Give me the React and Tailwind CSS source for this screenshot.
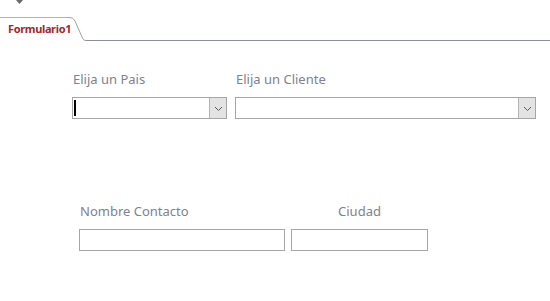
import React from "react";

function Chevron() {
  return (
    <svg width="9" height="6" viewBox="0 0 9 6" className="block mt-[1px]">
      <path d="M1 1 L4.5 4.5 L8 1" fill="none" stroke="#5a5a5a" strokeWidth="1" />
    </svg>
  );
}

function Combo({ width, cursor }) {
  return (
    <div className={`flex h-[22px] border border-[#a6a6a6] bg-white ${width}`}>
      <div className="flex-1 flex items-center pl-[1px]">
        {cursor ? <div className="w-[2px] h-[16px] bg-black" /> : null}
      </div>
      <div className="w-[17px] h-full border-l border-[#b4b4b4] bg-[#e3e3e3] flex items-center justify-center">
        <Chevron />
      </div>
    </div>
  );
}

export default function App() {
  const font = { fontFamily: '"Noto Sans", "Open Sans", sans-serif' };
  return (
    <div className="w-[550px] h-[301px] bg-white overflow-hidden" style={font}>
      <div className="h-[17px] pl-[16px]">
        <svg width="7" height="4" viewBox="0 0 7 4" className="block">
          <path d="M0 0 L7 0 L3.5 4 Z" fill="#6b6b6b" />
        </svg>
      </div>
      <div className="flex h-[24px]">
        <div className="w-[68px] border-t border-[#b9b2ac] pl-[8px] pt-[4px] shrink-0">
          <div className="text-[11px] leading-[14px] font-bold text-[#a4262c] whitespace-nowrap tracking-[-0.35px]">
            Formulario1
          </div>
        </div>
        <svg width="18" height="24" viewBox="0 0 18 24" className="block shrink-0">
          <path
            d="M0 0.5 C4 0.5 5 1 7 4 L14 20 C15.5 23 16 23.5 18 23.5"
            fill="none"
            stroke="#9a9ea6"
            strokeWidth="1"
          />
        </svg>
        <div className="flex-1 border-b border-[#8c9199]" />
      </div>

      <div className="pt-[29px] pl-[72px] flex gap-[8px]">
        <div className="w-[155px] flex flex-col">
          <div className="pl-[1px] text-[13px] leading-[18px] text-[#7d828d]">Elija un Pais</div>
          <div className="mt-[9px]">
            <Combo width="w-[155px]" cursor />
          </div>
        </div>
        <div className="w-[301px] flex flex-col">
          <div className="pl-[1px] text-[13px] leading-[18px] text-[#7d828d]">Elija un Cliente</div>
          <div className="mt-[9px]">
            <Combo width="w-[301px]" />
          </div>
        </div>
      </div>

      <div className="mt-[83px] pl-[79px] flex gap-[6px]">
        <div className="w-[206px] flex flex-col">
          <div className="pl-[1px] text-[13px] leading-[18px] text-[#7d828d]">Nombre Contacto</div>
          <div className="mt-[9px] h-[22px] border border-[#a6a6a6] bg-white" />
        </div>
        <div className="w-[137px] flex flex-col">
          <div className="text-center text-[13px] leading-[18px] text-[#7d828d]">Ciudad</div>
          <div className="mt-[9px] h-[22px] border border-[#a6a6a6] bg-white" />
        </div>
      </div>
    </div>
  );
}
